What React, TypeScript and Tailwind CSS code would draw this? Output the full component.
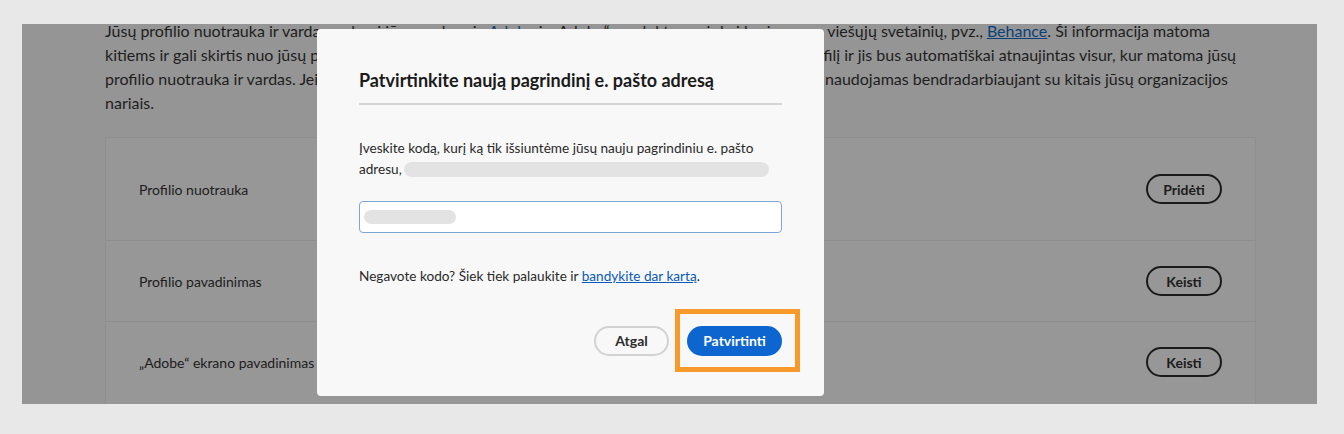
import React from 'react';

const rows = [
    { label: 'Profilio nuotrauka', action: 'Pridėti', h: 'h-[102px]' },
    { label: 'Profilio pavadinimas', action: 'Keisti', h: 'h-[81px]' },
    { label: '„Adobe“ ekrano pavadinimas', action: 'Keisti', h: 'h-[81px]' },
];

// left part of each line sits partly under the dialog, right part shows beside it
const lines = [
    {
        w: 'w-[1105px]',
        left: (
            <>
                Jūsų profilio nuotrauka ir vardas rodomi jūsų paskyroje <span className="text-[#0b3f7a] underline">Adobe</span> ir „Adobe“ produktuose ir kai kuriose
            </>
        ),
        right: (
            <>
                viešųjų svetainių, pvz., <span className="text-[#0b3f7a] underline">Behance</span>. Ši informacija matoma
            </>
        ),
    },
    {
        w: 'w-[1131px]',
        left: <>kitiems ir gali skirtis nuo jūsų paskyros informacijos. Pakeiskite viešąjį pr</>,
        right: <>ofilį ir jis bus automatiškai atnaujintas visur, kur matoma jūsų</>,
    },
    {
        w: 'w-[1123px]',
        left: <>profilio nuotrauka ir vardas. Jei esate organizacijos narys, šis profilis bus</>,
        right: <>naudojamas bendradarbiaujant su kitais jūsų organizacijos</>,
    },
];

export default function App() {
    return (
        <div className="h-[434px] w-[1344px] bg-[#e8e8e8] pt-[24px] pl-[22px] font-['Lato',sans-serif]">
            {/* page under the dimmed backdrop */}
            <div className="relative h-[380px] w-[1295px] overflow-hidden bg-[#959595]">
                <div className="-mt-[5px] pl-[83px] text-[16px] leading-[24px] text-[#1e1e1e]">
                    {lines.map((l, i) => (
                        <div key={i} className={`flex justify-between whitespace-nowrap ${l.w}`}>
                            <span>{l.left}</span>
                            <span>{l.right}</span>
                        </div>
                    ))}
                    <div>nariais.</div>
                </div>

                <div className="ml-[83px] mt-[22px] w-[1151px] border border-[#8f8f8f] bg-[#979797] pb-[30px]">
                    {rows.map((r, i) => (
                        <div
                            key={r.label}
                            className={`flex items-center justify-between px-[33px] ${r.h} ${i > 0 ? 'border-t border-[#8e8e8e]' : ''}`}
                        >
                            <span className="text-[14px] text-[#1c1c1c]">{r.label}</span>
                            <button className="h-[30px] w-[76px] rounded-full border-2 border-[#1a1a1a] text-[14px] font-bold text-[#1c1c1c]">
                                {r.action}
                            </button>
                        </div>
                    ))}
                </div>

                {/* modal dialog */}
                <div className="absolute left-[295px] top-[5px] h-[367px] w-[507px] rounded-[4px] bg-[#f8f8f8] px-[42px] pt-[38px]">
                    <h2 className="text-[18px] font-bold leading-[26px] text-[#1b1b1b]">
                        Patvirtinkite naują pagrindinį e. pašto adresą
                    </h2>
                    <div className="mt-[10px] h-[2px] bg-[#d6d6d6]" />
                    <p className="mt-[33px] text-[13.6px] leading-[21px] text-[#2a2a2a]">
                        Įveskite kodą, kurį ką tik išsiuntėme jūsų nauju pagrindiniu e. pašto
                        <br />
                        <span className="inline-flex items-center">
                            adresu,
                            <span className="ml-[2px] inline-block h-[15px] w-[365px] rounded-full bg-[#e3e3e3]" />
                        </span>
                    </p>
                    <div className="mt-[21px] flex h-[32px] items-center rounded-[4px] border border-[#7ea6d6] bg-white px-[4px]">
                        <span className="h-[14px] w-[92px] rounded-full bg-[#e3e3e3]" />
                    </div>
                    <p className="mt-[33px] text-[13.6px] leading-[21px] text-[#2a2a2a]">
                        Negavote kodo? Šiek tiek palaukite ir <span className="text-[#0a5bb8] underline">bandykite dar kartą</span>.
                    </p>
                    <div className="mt-[22px] flex items-center justify-end">
                        <button className="h-[30px] w-[75px] rounded-full border-2 border-[#d2d2d2] text-[14px] font-bold text-[#2c2c2c]">
                            Atgal
                        </button>
                        <div className="ml-[6px] -mr-[18px] flex h-[63px] w-[125px] shrink-0 items-center border-[5px] border-[#f7992b] pl-[7px]">
                            <button className="h-[30px] w-[95px] rounded-full bg-[#0d66d0] text-[14px] font-bold text-white">
                                Patvirtinti
                            </button>
                        </div>
                    </div>
                </div>
            </div>
        </div>
    );
}
